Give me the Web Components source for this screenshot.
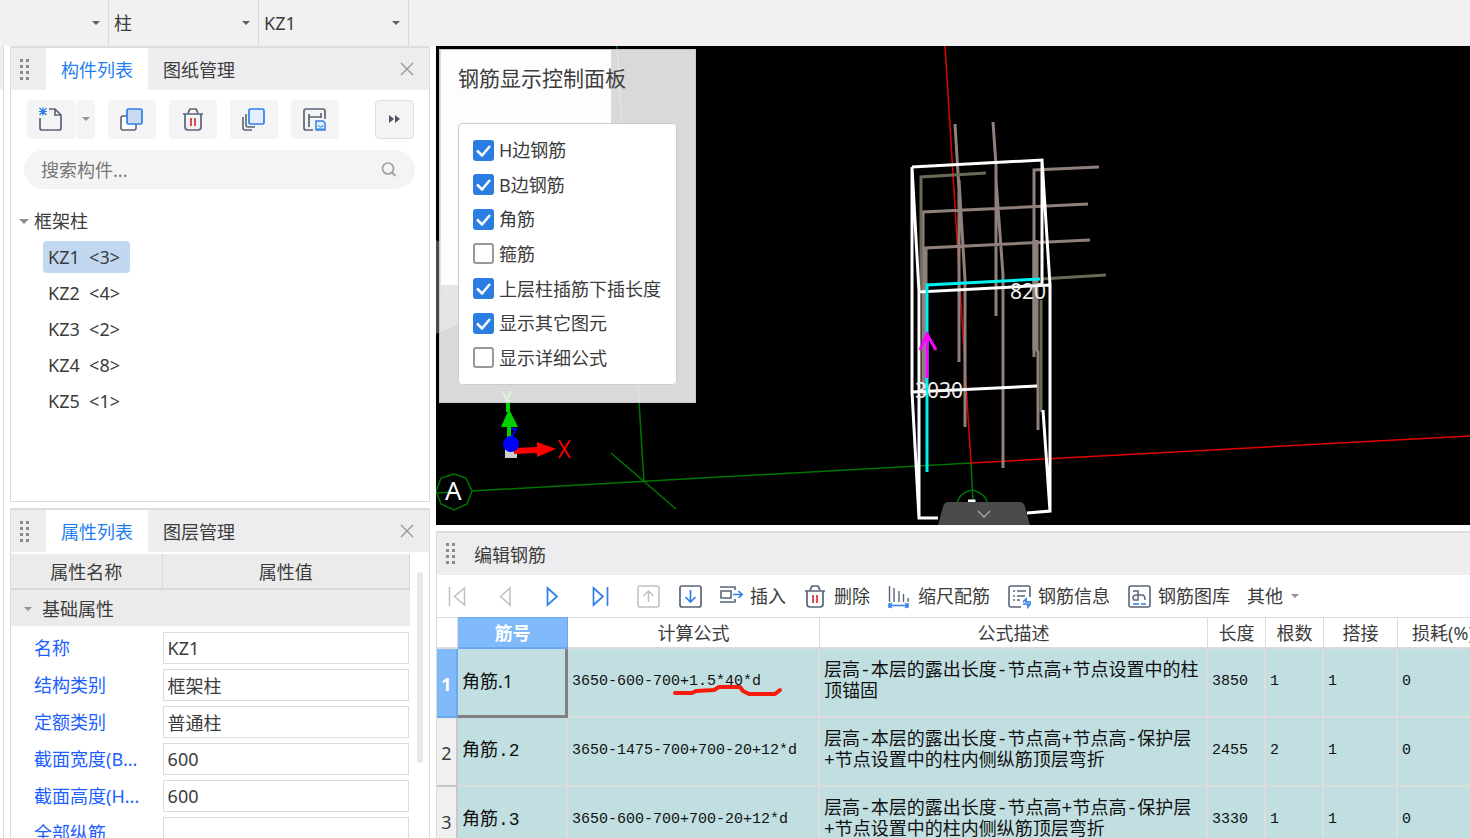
<!DOCTYPE html>
<html lang="zh-CN">
<head>
<meta charset="utf-8">
<title>编辑钢筋</title>
<style>
html,body{margin:0;height:100%}
body{overflow:hidden;background:#fff;color:#3c3c3c;font:18px/24px "Noto Sans","Noto Sans CJK SC",sans-serif}
</style>
</head>
<body>
<rebar-app></rebar-app>
<script>
const base = `*{box-sizing:border-box}button,input,select{font:inherit;color:inherit;margin:0;border-radius:0}
button{border:0;padding:0;background:none;display:flex;align-items:center;justify-content:center;white-space:nowrap}
svg{display:block;flex:none}`;
function define(name, css, html, setup) {
  const tpl = document.createElement('template');
  tpl.innerHTML = `<style>${base}${css}</style>${html}`;
  customElements.define(name, class extends HTMLElement {
    constructor() {
      super();
      this.attachShadow({mode: 'open'}).append(tpl.content.cloneNode(true));
    }
    connectedCallback() { if (setup) setup(this, this.shadowRoot); }
  });
}

const icons = {
  grip: '<g fill="#8a8a8a"><path d="M6 2h3v3H6zM12 2h3v3h-3zM6 8h3v3H6zM12 8h3v3h-3zM6 14h3v3H6zM12 14h3v3h-3zM6 20h3v3H6zM12 20h3v3h-3z"/></g>',
  close: '<path d="M6 6l12 12M18 6L6 18" stroke="#999" stroke-width="1.4"/>',
  caret: '<path d="M8 10h8l-4 4z" fill="#5a6170"/>',
  caretGrey: '<path d="M8 10h8l-4 4z" fill="#949494"/>',
  tree: '<path d="M7 10h10l-5 5z" fill="#8c8c8c"/>',
  create: '<g fill="none" stroke="#5a6478" stroke-width="1.7"><path d="M1 11v10q0 2 2 2h17q2 0 2-2V8l-6-6h-6M16 2v6h6"/></g><g stroke="#2f7fe8" stroke-width="1.2"><path d="M0 4.500h8M4 .5v8M.5 1l7 7M7.500 1l-7 7"/></g>',
  copy: '<rect x="1" y="9" width="15" height="14" rx="2" fill="#fff" stroke="#5a6478" stroke-width="1.600"/><rect x="7" y="2" width="15" height="15" rx="1.500" fill="#c9daf2" stroke="#2f7fe8" stroke-width="1.700"/>',
  trash: '<g fill="none" stroke="#5a6478" stroke-width="1.700"><path d="M2 7h20M4 7v13q0 3 3 3h10q3 0 3-3V7M7 6l2-4h6l2 4"/></g><path d="M10 11v8M14 11v8" stroke="#e0393e" stroke-width="1.800"/>',
  layers: '<g fill="none" stroke="#5a6478" stroke-width="1.600"><path d="M1 10v11q0 2 2 2h7M4 7v11q0 2 2 2h7"/></g><rect x="7" y="2" width="15" height="15" rx="1.500" fill="#e3effd" stroke="#2f7fe8" stroke-width="1.700"/>',
  save: '<g fill="none" stroke="#5a6478" stroke-width="1.700"><path d="M10 23H3q-2 0-2-2V4q0-2 2-2h17q2 0 2 2v8M6 7v13M18 6v5M6 10h12"/></g><path d="M13 14h7l2 2v7h-9z" fill="#e3effd" stroke="#2f7fe8" stroke-width="1.500"/><path d="M15 18l2 2h2l1-2M14 22h7" fill="none" stroke="#2f7fe8"/>',
  more: '<path d="M6 8l5 4-5 4zM12 8l5 4-5 4z" fill="#4d5566"/>',
  search: '<circle cx="10" cy="11.500" r="5.500" fill="none" stroke="#a0a0a0" stroke-width="1.700"/><path d="M14 15.500l3.500 3.500" stroke="#a0a0a0" stroke-width="1.900"/>',
  first: '<path d="M4.500 3v19M19.500 4v17L9.500 12.500z" fill="none" stroke="#c0c0c0" stroke-width="1.500"/>',
  prev: '<path d="M17 4v17L7.500 12.500z" fill="none" stroke="#c0c0c0" stroke-width="1.500"/>',
  next: '<path d="M6.500 4v17L16 12.500z" fill="none" stroke="#2f7fe8" stroke-width="1.700"/>',
  last: '<path d="M4.500 4v17L14 12.500zM18.500 3v19" fill="none" stroke="#2f7fe8" stroke-width="1.700"/>',
  up: '<rect x="1" y="2" width="21" height="21" rx="2" fill="none" stroke="#c0c0c0" stroke-width="1.500"/><path d="M11.500 18V7M6.500 12l5-5 5 5" fill="none" stroke="#c0c0c0" stroke-width="1.500"/>',
  down: '<rect x="2" y="2" width="21" height="21" rx="2" fill="none" stroke="#5a6478" stroke-width="1.700"/><path d="M12.500 6v12M7.500 13l5 5 5-5" fill="none" stroke="#2f7fe8" stroke-width="1.700"/>',
  insert: '<g fill="none" stroke="#5a6478" stroke-width="1.600"><path d="M1 3h15v3M1 18h15v-3M2 7h10v7H2z"/></g><path d="M14 10.500h9M19.500 7l3.500 3.500-3.500 3.500" fill="none" stroke="#2f7fe8" stroke-width="1.600"/>',
  scale: '<path d="M2.500 2v16M7 4v14M12 7v11M16.500 10v8M21 14v4" stroke="#5a6478" stroke-width="1.400"/><path d="M2 19v5M21 19v5M2 21.500h19M5 19l-3 2.500L5 24M18 19l3 2.500-3 2.500" fill="none" stroke="#2f7fe8" stroke-width="1.400"/>',
  info: '<g fill="none" stroke="#5a6478" stroke-width="1.600"><path d="M14 23H4q-2 0-2-2V4q0-2 2-2h17q2 0 2 2v9M6 7h2M10 7h9M6 12h2M10 12h8M6 16h2M10 16h3"/></g><path d="M16 18l3-3v3h5M24 19l-3 4v-3h-5" fill="none" stroke="#2f7fe8" stroke-width="1.600"/>',
  library: '<rect x="2" y="2" width="21" height="21" rx="2" fill="none" stroke="#5a6478" stroke-width="1.600"/><path d="M6 7h5v9H7q-3-4 2-5h6q3 0 3 5" fill="none" stroke="#5a6478" stroke-width="1.500"/><path d="M6 20h6M14 20h5" stroke="#2f7fe8" stroke-width="1.600"/>'
};
define('ui-icon', `:host{display:block;width:24px;height:25px;flex:none}`,
  `<svg width="24" height="25" viewBox="0 0 24 25" aria-hidden="true"></svg>`,
  (el, root) => { root.querySelector('svg').innerHTML = icons[el.getAttribute('name')]; });

define('combo-bar', `
:host{display:flex;height:46px;background:#f1f1f1}
label{position:relative;width:150px;border-right:1px solid #d8d8d8}
.floor{width:109px}
select{appearance:none;width:100%;height:46px;border:0;background:none;padding:0 30px 0 5px;outline:0}
ui-icon{position:absolute;right:0;top:11px;pointer-events:none}`,
`<label class="floor"><select aria-label="楼层"><option></option></select><ui-icon name="caret"></ui-icon></label>
<label><select aria-label="构件类型"><option>柱</option></select><ui-icon name="caret"></ui-icon></label>
<label><select aria-label="构件"><option>KZ1</option></select><ui-icon name="caret"></ui-icon></label>`);

define('dock-panel', `
:host{display:flex;flex-direction:column;border:1px solid #dcdcdc;border-top-width:2px;background:#fff;overflow:hidden;min-height:0}
header{display:flex;flex:none;height:42px;background:#ededef;align-items:stretch}
header>ui-icon{align-self:center}
.grip{margin:0 8px 0 3px}
.end{margin-left:auto;display:flex;align-items:center;padding-right:10px}
.body{flex:1;min-height:0;display:flex;flex-direction:column}
:host([no-close]) .end{display:none}`,
`<header><ui-icon class="grip" name="grip"></ui-icon><slot name="tab"></slot><div class="end"><button aria-label="关闭"><ui-icon name="close"></ui-icon></button></div></header>
<div class="body"><slot></slot></div>`);

define('component-list', `
:host{display:block}
.tools{display:flex;gap:13px;padding:10px 15px 0 16px;height:49px}
.tools button{width:48px;height:39px;background:#f4f4f4;border-radius:4px}
.split{display:flex;gap:1px}
.split .drop{width:19px}
.tools .more{width:39px;margin-left:auto;border:1px solid #dedede}
.search{display:flex;align-items:center;height:39px;margin:11px 14px 0 13px;padding:0 13px 0 17px;border-radius:20px;background:#f4f4f4}
input{flex:1;min-width:0;border:0;background:none;outline:0;padding:0;height:39px}
input::placeholder{color:#777;opacity:1}
ul{list-style:none;margin:0;padding:0}
.tree{padding:14px 0 0 1px}
.group{height:36px}
.group ui-icon{width:22px}
.tree ul{padding-left:31px}
li li{height:36px;display:flex;align-items:center}
li li button{height:32px;padding:0 10px 0 5px;border-radius:4px;white-space:pre}
li li button[aria-pressed=true]{background:#c1d8f0}`,
`<div class="tools"><div class="split"><button aria-label="新建"><ui-icon name="create"></ui-icon></button><button class="drop" aria-label="更多新建"><ui-icon name="caretGrey"></ui-icon></button></div>
<button aria-label="复制"><ui-icon name="copy"></ui-icon></button><button aria-label="删除"><ui-icon name="trash"></ui-icon></button><button aria-label="层间复制"><ui-icon name="layers"></ui-icon></button><button aria-label="存档"><ui-icon name="save"></ui-icon></button><button class="more" aria-label="更多"><ui-icon name="more"></ui-icon></button></div>
<div class="search"><input aria-label="搜索构件" placeholder="搜索构件..."><ui-icon name="search"></ui-icon></div>
<ul class="tree"><li><button class="group"><ui-icon name="tree"></ui-icon>框架柱</button><ul></ul></li></ul>`,
(el, root) => {
  root.querySelector('.tree ul').innerHTML = [3, 4, 2, 8, 1].map((n, i) =>
    `<li><button aria-pressed="${i === 0}">KZ${i + 1}  &lt;${n}&gt;</button></li>`).join('');
});

define('property-grid', `
:host{display:flex;padding-top:2px;overflow:hidden;flex:1;min-height:0}
table{border-spacing:0;table-layout:fixed;flex:1;min-width:0}
.name{width:38%}
th,td{padding:0;font-weight:400;text-align:left}
thead th{height:36px;padding-top:2px;background:#ebebeb;text-align:center;border-right:1px solid #d8d8d8;border-bottom:2px solid #d8d8d8}
tbody .group th{height:39px;padding:2px 0 0 5px;color:#3c3c3c;background:#ebebeb;border-bottom:3px solid #fff}
.group button{gap:2px}
tbody th{color:#1d5fff;padding-left:23px}
tr.row>*{height:37px}
input{display:block;width:calc(100% - 1px);height:32px;border:1px solid #dcdcdc;padding:0 4px;background:#fff;outline:0}
.track{width:19px;flex:none;padding:18px 6px 0 7px}
.thumb{height:191px;border-radius:3px;background:#e8e8e8}`,
`<table><colgroup><col class="name"><col></colgroup><thead><tr><th>属性名称</th><th>属性值</th></tr></thead><tbody></tbody></table><div class="track"><div class="thumb"></div></div>`,
(el, root) => {
  const rows = [['名称', 'KZ1'], ['结构类别', '框架柱'], ['定额类别', '普通柱'], ['截面宽度(B...', '600'], ['截面高度(H...', '600'], ['全部纵筋', '']];
  root.querySelector('tbody').innerHTML = `<tr class="group"><th colspan="2"><button><ui-icon name="caretGrey"></ui-icon>基础属性</button></th></tr>` +
    rows.map(([k, v], i) => `<tr class="row"><th><label for="p${i}">${k}</label></th><td><input id="p${i}" value="${v}"></td></tr>`).join('');
});

define('display-options', `
:host{display:block;width:257px;height:354px;padding:14px 18px 19px 18px;color:#3c3c3c;border:1px solid #c8c8c8;
background:linear-gradient(#fdfdfd,#fdfdfd) 1px 0/170px 235px no-repeat,rgba(255,255,255,.85)}
h2{font-size:21px;line-height:28px;font-weight:400;margin:0;white-space:nowrap}
fieldset{margin:31px 0 0;padding:14px;height:262px;border:1px solid #ccc;border-radius:4px;background:#fff;display:flex;flex-direction:column;justify-content:space-between}
label{display:flex;align-items:center;gap:5px;white-space:nowrap}
input{appearance:none;width:21px;height:21px;border:2px solid #999;border-radius:3px;background:#fff;flex:none}
input:checked{border:0;background:#2a7de1 url("data:image/svg+xml,%3Csvg xmlns='http://www.w3.org/2000/svg' viewBox='0 0 21 21'%3E%3Cpath d='M4 10.500l5 5L17 6' fill='none' stroke='white' stroke-width='2.500'/%3E%3C/svg%3E")}`,
`<h2>钢筋显示控制面板</h2><fieldset aria-label="钢筋显示"></fieldset>`,
(el, root) => {
  root.querySelector('fieldset').innerHTML = [['H边钢筋', 1], ['B边钢筋', 1], ['角筋', 1], ['箍筋', 0], ['上层柱插筋下插长度', 1], ['显示其它图元', 1], ['显示详细公式', 0]]
    .map(([t, c]) => `<label><input type="checkbox"${c ? ' checked' : ''}>${t}</label>`).join('');
});

define('model-view', `
:host{display:block;position:relative;background:#000;overflow:hidden;min-height:0}
.scene{position:absolute;inset:0;width:100%;height:100%}
display-options{position:absolute;left:3px;top:3px}
text{font-family:"Noto Sans",sans-serif}`,
`<svg class="scene" viewBox="436 46 1034 479" preserveAspectRatio="xMinYMin slice" fill="none">
<path d="M436 240l22 10q3 2 3 5v65q0 4-3 5l-22 9z" fill="#4b4b4b"/><path d="M450 284l-5 5 5 5" stroke="#b0b0b0"/>
<g stroke="#007400" stroke-width="1.500"><path d="M617 46L644 482M611 453L676 509M472 491L971 463L973 500"/><path d="M454 474l12 4 6 13-5 13-13 6-13-6-5-13 5-13z"/><path d="M436 493l17-1M957 505q1-12 15-15 14 3 16 15"/></g>
<path d="M945 46L971 463L1470 436" stroke="#e00000" stroke-width="1.500"/>
<g stroke="#8f807b" stroke-width="3"><path d="M955 124L959 190V362M959 180L965 280V427M993 122L996 165V316M996 180L1003 275V468M923 290V212L1088 204M926 395V248L1090 240M1034 357V170L1099 167M1037 240V350L1038 352V430"/></g>
<path d="M924 248V395M1035 240V350" stroke="#8f807b" stroke-width="5"/>
<path d="M921 290V177L986 173M1041 300V412M1041 279L1106 275" stroke="#6c6956" stroke-width="3"/>
<g stroke="#fff" stroke-width="3"><path d="M912 167L1042 160V285M912 167V392L919 518H938M912 167L919 292L1050 285V511L1027 513M919 292V518M1042 160L1050 285M912 392L1037 386M1043 410L1050 511"/></g>
<path d="M927 472V285L1040 279" stroke="#00f0f0" stroke-width="3"/>
<path d="M927 378V333M920 350l7-16 9 16" stroke="#f0f" stroke-width="3"/>
<g fill="#eee" font-size="21"><text x="1010" y="299">820</text><text x="915" y="398">3030</text></g>
<text x="445" y="500" font-size="26" fill="#fff">A</text>
<text x="501" y="405" font-size="20" fill="#00d000">Y</text>
<path d="M508 400V412M509 426V440" stroke="#00d000" stroke-width="4"/><path d="M509 409l9 18h-17z" fill="#00d000"/>
<path d="M505 449h12v9h-12z" fill="#ccc"/><path d="M514 451l24-1" stroke="#f00" stroke-width="6"/><path d="M537 442l19 7-19 8z" fill="#f00"/>
<path d="M511 429h5l-5 9" stroke="#00f" stroke-width="2"/><circle cx="511" cy="444" r="8" fill="#00f"/>
<path d="M559 440l11 18M570 440l-11 18" stroke="#f00" stroke-width="1.800"/>
<path d="M968 501h6v4" stroke="#fff" stroke-width="3"/>
<path d="M938 525l5-18q1-5 6-5h70q5 0 6 5l5 18z" fill="#4b4b4b"/><path d="M978 511l6 6 6-6" stroke="#aaa" stroke-width="1.300"/>
</svg><display-options></display-options>`);

define('rebar-toolbar', `
:host{display:flex;align-items:center;gap:17px;height:42px;padding:1px 0 0 8px;flex:none;overflow:hidden}
nav{display:flex;gap:24px}
.text{gap:7px}
.menu{gap:0}`,
`<nav><button aria-label="首条" disabled><ui-icon name="first"></ui-icon></button><button aria-label="上一条" disabled><ui-icon name="prev"></ui-icon></button><button aria-label="下一条"><ui-icon name="next"></ui-icon></button><button aria-label="末条"><ui-icon name="last"></ui-icon></button><button aria-label="上移" disabled><ui-icon name="up"></ui-icon></button></nav>
<button aria-label="下移"><ui-icon name="down"></ui-icon></button>
<button class="text"><ui-icon name="insert"></ui-icon>插入</button>
<button class="text"><ui-icon name="trash"></ui-icon>删除</button>
<button class="text"><ui-icon name="scale"></ui-icon>缩尺配筋</button>
<button class="text"><ui-icon name="info"></ui-icon>钢筋信息</button>
<button class="text"><ui-icon name="library"></ui-icon>钢筋图库</button>
<button class="text menu">其他<ui-icon name="caretGrey"></ui-icon></button>`);

define('rebar-table', `
:host{display:block;flex:1;min-height:0;overflow:hidden}
table{table-layout:fixed;border-spacing:0;min-width:100%;width:1052px}
th,td{padding:0 0 0 4px;border-right:2px solid #dcdcdc;border-bottom:2px solid #dcdcdc}
thead th{height:32px;padding:1px 0 0;font-weight:400;background:#fff;border-top:1px solid #dcdcdc;white-space:nowrap;border-right-width:1px}
thead th.on,tbody th.on{background:#81bafa;color:#fff;font-weight:700;border-color:#6aa9ee}
tbody th{padding:4px 0 0;background:#f0f0f0;font-weight:400;text-align:center;border-right-color:#c8c8c8;border-bottom-color:#c8c8c8}
td{height:69px;background:#c1dfe1;color:#111;font:15px/21px "Liberation Mono","Noto Sans CJK SC",monospace;position:relative;white-space:nowrap;padding-bottom:2px}
td.no,td.desc{font-size:18px;padding-bottom:0}
td.desc{white-space:normal;padding-right:4px}
td.cur{font-family:"Noto Sans","Noto Sans CJK SC",sans-serif;border-right:3px solid #808080;border-bottom:3px solid #808080}
.mark{position:absolute;left:104px;top:36px}`,
`<table><colgroup><col style="width:21px"><col style="width:110px"><col style="width:252px"><col style="width:388px"><col style="width:58px"><col style="width:58px"><col style="width:74px"><col style="width:91px"></colgroup>
<thead><tr><th></th><th class="on">筋号</th><th>计算公式</th><th>公式描述</th><th>长度</th><th>根数</th><th>搭接</th><th>损耗(%)</th></tr></thead><tbody></tbody></table>`,
(el, root) => {
  const bend = '层高-本层的露出长度-节点高+节点高-保护层+节点设置中的柱内侧纵筋顶层弯折';
  const rows = [
    ['角筋.1', '3650-600-700+1.5*40*d', '层高-本层的露出长度-节点高+节点设置中的柱顶锚固', 3850, 1, 1, 0],
    ['角筋.2', '3650-1475-700+700-20+12*d', bend, 2455, 2, 1, 0],
    ['角筋.3', '3650-600-700+700-20+12*d', bend, 3330, 1, 1, 0]];
  const mark = '<svg class="mark" width="112" height="12" viewBox="672 684 112 12"><path d="M675 692h17l4-2 18-1 5-3h21l3 4 6 3h26l5-4" fill="none" stroke="#f81b0e" stroke-width="4" stroke-linecap="round" stroke-linejoin="round"/></svg>';
  root.querySelector('tbody').innerHTML = rows.map((r, i) => `<tr><th${i ? '' : ' class="on"'}>${i + 1}</th>` +
    r.map((v, j) => `<td class="${['no', 'formula', 'desc'][j] || 'num'}${i + j ? '' : ' cur'}">${v}${i === 0 && j === 1 ? mark : ''}</td>`).join('') + '</tr>').join('');
});

define('rebar-app', `
:host{display:flex;flex-direction:column;height:100vh}
main{flex:1;min-height:0;display:grid;grid-template-columns:4px 420px 1fr;column-gap:6px}
.edge{border-right:1px solid #dcdcdc;background:linear-gradient(#ededef 43px,#fff 43px)}
.col{display:flex;flex-direction:column;gap:6px;min-width:0;min-height:0}
.top-left{flex:456 1 0}.bottom-left{flex:330 1 0;border-bottom:0}
.view{flex:480 1 0}.edit{flex:306 1 0;border-bottom:0;border-right:0}
[role=tab]{padding:2px 15px 0}
[role=tab][aria-selected=true]{background:#fff;color:#1f7ff0}
h2{font-size:18px;font-weight:400;margin:0 0 0 2px;line-height:44px}`,
`<combo-bar></combo-bar>
<main><div class="edge"></div>
<div class="col">
<dock-panel class="top-left"><button slot="tab" role="tab" aria-selected="true">构件列表</button><button slot="tab" role="tab" aria-selected="false">图纸管理</button><component-list></component-list></dock-panel>
<dock-panel class="bottom-left"><button slot="tab" role="tab" aria-selected="true">属性列表</button><button slot="tab" role="tab" aria-selected="false">图层管理</button><property-grid></property-grid></dock-panel>
</div>
<div class="col">
<model-view class="view"></model-view>
<dock-panel class="edit" no-close><h2 slot="tab">编辑钢筋</h2><rebar-toolbar></rebar-toolbar><rebar-table></rebar-table></dock-panel>
</div></main>`);
</script>
</body>
</html>
